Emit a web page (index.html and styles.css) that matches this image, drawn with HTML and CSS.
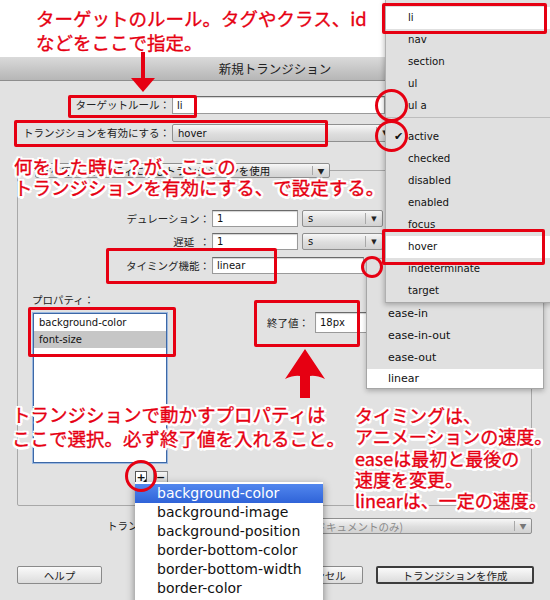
FILE: index.html
```html
<!DOCTYPE html>
<html lang="ja">
<head>
<meta charset="utf-8">
<title>新規トランジション</title>
<link rel="stylesheet" href="styles.css">
</head>
<body>
<div class="page">
  <header class="note note-top">ターゲットのルール。タグやクラス、id<br>などをここで指定。</header>

  <section class="dialog">
    <div class="titlebar">新規トランジション</div>
    <div class="dlg-body">
      <div class="row">
        <label class="lbl lbl-main">ターゲットルール：</label>
        <span class="input in-target">li</span>
      </div>
      <div class="row row-on">
        <label class="lbl lbl-main">トランジションを有効にする：</label>
        <span class="select sel-on"><span class="val">hover</span><span class="arr">▼</span></span>
      </div>

      <div class="group">
        <span class="select sel-legend"><span class="val">すべてのプロパティに同じトランジションを使用</span><span class="arr">▼</span></span>
        <div class="grow grow-first">
          <label class="lbl lbl-grp">デュレーション：</label>
          <span class="input in-num">1</span>
          <span class="select sel-unit"><span class="val">s</span><span class="arr">▼</span></span>
        </div>
        <div class="grow">
          <label class="lbl lbl-grp">遅延&ensp;：</label>
          <span class="input in-num">1</span>
          <span class="select sel-unit"><span class="val">s</span><span class="arr">▼</span></span>
        </div>
        <div class="grow grow-timing">
          <label class="lbl lbl-grp">タイミング機能：</label>
          <span class="input in-timing">linear</span>
        </div>
        <div class="props">
          <div class="props-left">
            <div class="lbl plabel">プロパティ：</div>
            <ul class="plist">
              <li>background-color</li>
              <li class="on">font-size</li>
            </ul>
            <div class="pm">
              <span class="sq sq-plus">+</span>
              <span class="sq sq-minus">−</span>
            </div>
          </div>
          <div class="endval">
            <label class="lbl">終了値：</label>
            <span class="input in-end">18px</span>
          </div>
        </div>
      </div>

      <div class="row row-where">
        <label class="lbl lbl-where">トランジションの作成場所：</label>
        <span class="select sel-where"><span class="val">(このドキュメントのみ)</span><span class="arr">▼</span></span>
      </div>

      <div class="buttons">
        <span class="btn btn-help">ヘルプ</span>
        <span class="btn btn-cancel">キャンセル</span>
        <span class="btn btn-ok">トランジションを作成</span>
      </div>
    </div>
  </section>

  <ul class="menu menu-timing">
    <li>cubic-bezier</li>
    <li>ease</li>
    <li>ease-in</li>
    <li>ease-in-out</li>
    <li>ease-out</li>
    <li class="hl last">linear</li>
  </ul>

  <ul class="menu menu-target">
    <li class="hl">li</li>
    <li>nav</li>
    <li>section</li>
    <li>ul</li>
    <li>ul a</li>
    <li class="sep"></li>
    <li><span class="check">✔</span>active</li>
    <li>checked</li>
    <li>disabled</li>
    <li>enabled</li>
    <li>focus</li>
    <li class="hl">hover</li>
    <li>indeterminate</li>
    <li>target</li>
  </ul>

  <ul class="pdrop">
    <li class="on">background-color</li>
    <li>background-image</li>
    <li>background-position</li>
    <li>border-bottom-color</li>
    <li>border-bottom-width</li>
    <li>border-color</li>
  </ul>

  <div class="rbox b-target"></div>
  <div class="rbox b-on"></div>
  <div class="rbox b-li"></div>
  <div class="rbox b-hover"></div>
  <div class="rbox b-timing"></div>
  <div class="rbox b-end"></div>
  <div class="rbox b-prop"></div>

  <div class="rcirc c-1"></div>
  <div class="rcirc c-2"></div>
  <div class="rcirc c-3"></div>
  <div class="rcirc c-4"></div>

  <svg class="arrow arrow-down" width="26" height="41" viewBox="0 0 26 41">
    <rect x="11" y="0" width="4" height="28" fill="#e60012"/>
    <polygon points="1,26 25,26 13,40" fill="#e60012"/>
  </svg>
  <svg class="arrow arrow-up" width="42" height="50" viewBox="0 0 42 50">
    <path d="M21 0 L41 30 Q32 26 26 27 L26 49 L16 49 L16 27 Q10 26 1 30 Z" fill="#e60012"/>
  </svg>

  <p class="note note-abs note-on">何をした時に？が、ここの<br>トランジションを有効にする、で設定する。</p>
  <p class="note note-abs note-prop">トランジションで動かすプロパティは<br>ここで選択。必ず終了値を入れること。</p>
  <p class="note note-abs note-timing">タイミングは、<br>アニメーションの速度。<br>easeは最初と最後の<br>速度を変更。<br>linearは、一定の速度。</p>
</div>
</body>
</html>
```

FILE: styles.css
```css
* { box-sizing: border-box; margin: 0; padding: 0; }
html, body { width: 550px; height: 600px; overflow: hidden; background: #fff; }
body { font-family: "Noto Sans CJK JP", sans-serif; color: #1e1e1e; }
ul { list-style: none; }

.page { position: relative; width: 550px; height: 600px; overflow: hidden; }

/* annotations */
.note {
  color: #e60012;
  font-family: "Noto Sans CJK JP", sans-serif;
  font-size: 18.5px;
  line-height: 23px;
  white-space: nowrap;
  -webkit-text-stroke: 0.35px #e60012;
}
.note-top { height: 57px; padding: 6px 0 0 36px; line-height: 24px; }
.note-abs {
  position: absolute;
  z-index: 20;
  text-shadow:
    -2px -2px 0 #fff, 2px -2px 0 #fff, -2px 2px 0 #fff, 2px 2px 0 #fff,
    0 -2.5px 0 #fff, 0 2.5px 0 #fff, -2.5px 0 0 #fff, 2.5px 0 0 #fff,
    -1px -2.5px 0 #fff, 1px 2.5px 0 #fff, -2.5px 1px 0 #fff, 2.5px -1px 0 #fff;
}
.note-on { left: 14px; top: 156px; line-height: 21px; }
.note-prop { left: 12px; top: 402px; line-height: 24px; }
.note-timing { left: 355px; top: 405px; line-height: 21.3px; font-size: 18px; }

/* dialog */
.dialog { height: 543px; background: #e2e2e2; }
.titlebar {
  height: 24px;
  border-bottom: 1px solid #8e8e8e;
  background: linear-gradient(#dadada, #b6b6b6);
  text-align: center;
  font-size: 12.5px;
  line-height: 23px;
  color: #222;
}
.dlg-body { padding-top: 15px; }

.row { display: flex; align-items: center; height: 18px; }
.row-on { margin-top: 10px; }

.lbl { font-size: 10.5px; line-height: 14px; white-space: nowrap; color: #222; }
.lbl-main { width: 170px; text-align: right; }
.lbl-grp { width: 192px; text-align: right; }

.input {
  display: flex;
  align-items: center;
  height: 18px;
  padding-left: 4px;
  background: #fff;
  border: 1px solid #9a9a9a;
  border-top-color: #6a6a6a;
  box-shadow: inset 0 1px 1px rgba(0, 0, 0, .18);
  font-family: "DejaVu Sans", sans-serif;
  font-size: 10px;
  color: #111;
}
.in-target { margin-left: 2px; width: 213px; }

.select {
  display: flex;
  align-items: center;
  height: 18px;
  background: linear-gradient(#f7f7f7, #dedede 55%, #d2d2d2);
  border: 1px solid #8f8f8f;
  border-radius: 2px;
  font-family: "DejaVu Sans", "Noto Sans CJK JP", sans-serif;
  font-size: 10px;
  color: #111;
}
.select .val { flex: 1; padding-left: 5px; white-space: nowrap; overflow: hidden; }
.select .arr {
  width: 17px;
  height: 70%;
  border-left: 1px solid #a8a8a8;
  display: flex;
  align-items: center;
  justify-content: center;
  font-size: 7px;
  color: #222;
}
.sel-on { margin-left: 2px; width: 222px; }

.group {
  margin: 28px 18px 0 17px;
  height: 336px;
  border: 1px solid #a8a8a8;
  border-radius: 2px;
}
.sel-legend {
  margin: -8px 0 0 17px;
  width: 295px;
  height: 15px;
  font-family: "Noto Sans CJK JP", sans-serif;
  font-size: 10.5px;
}

.grow { display: flex; align-items: center; height: 17px; margin-top: 6px; }
.grow-first { margin-top: 32px; }
.grow-timing { margin-top: 7px; }
.in-num { margin-left: 2px; width: 86px; height: 17px; }
.sel-unit { margin-left: 4px; width: 81px; height: 17px; }
.in-timing { margin-left: 2px; width: 152px; height: 17px; }

.props { display: flex; margin-top: 19px; }
.props-left { width: 150px; }
.plabel { margin-left: 14px; }
.plist {
  margin: 6px 0 0 15px;
  width: 134px;
  height: 150px;
  background: #fff;
  border: 1px solid #3d68a6;
  box-shadow: 0 0 0 1px #9bb8e0;
  font-family: "DejaVu Sans", sans-serif;
  font-size: 10px;
  color: #111;
}
.plist li { height: 17px; line-height: 17px; padding-left: 5px; }
.plist li.on { background: #c6c6c6; }

.pm { display: flex; gap: 6px; margin: 8px 0 0 117px; }
.sq {
  position: relative;
  display: flex;
  align-items: center;
  justify-content: center;
  width: 12px;
  height: 12px;
  border: 1px solid #555;
  background: #fff;
  font-family: "DejaVu Sans", sans-serif;
  font-weight: bold;
  font-size: 11px;
  line-height: 1;
  color: #111;
}
.sq-plus::after {
  content: "";
  position: absolute;
  right: 0;
  bottom: 0;
  border-left: 3px solid transparent;
  border-bottom: 3px solid #111;
}
.sq-minus { width: 15px; background: linear-gradient(#f5f5f5, #d5d5d5); border-color: #888; }

.endval { display: flex; align-items: center; height: 21px; margin: 19px 0 0 99px; }
.in-end { margin-left: 6px; width: 70px; height: 21px; }

.row-where { margin-top: 12px; height: 16px; }
.lbl-where { margin-left: 107px; width: 175px; }
.sel-where {
  margin-left: 3px;
  width: 247px;
  height: 16px;
  color: #8a8a8a;
  font-family: "Noto Sans CJK JP", sans-serif;
  font-size: 10.5px;
}
.sel-where .arr { color: #777; }

.buttons { display: flex; margin-top: 32px; }
.btn {
  display: flex;
  align-items: center;
  justify-content: center;
  height: 18px;
  font-size: 10.5px;
  color: #222;
  background: linear-gradient(#fafafa, #dcdcdc);
  border: 1px solid #8a8a8a;
  border-radius: 2px;
}
.btn-help { margin-left: 17px; width: 85px; }
.btn-cancel { margin-left: 174px; width: 87px; }
.btn-ok { margin-left: 13px; width: 158px; border: 2px solid #3c3c3c; }

/* popup menus */
.menu {
  position: absolute;
  background: #e0e0e0;
  font-family: "DejaVu Sans", sans-serif;
  color: #111;
}
.menu li { position: relative; height: 22px; line-height: 22px; padding-left: 22px; }
.menu li.hl { background: #fff; }
.menu li.sep { height: 9px; border-top: 1px solid #bdbdbd; }
.check { position: absolute; left: 8px; font-size: 11px; }

.menu-target {
  left: 385px;
  top: 0;
  width: 170px;
  padding-top: 7px;
  border-left: 1px solid #b0b0b0;
  border-bottom: 1px solid #a8a8a8;
  box-shadow: -1px 2px 5px rgba(0, 0, 0, .25);
  z-index: 6;
  font-size: 10.2px;
}
.menu-timing {
  left: 366px;
  top: 258px;
  width: 178px;
  border: 1px solid #a6a6a6;
  box-shadow: 0 2px 5px rgba(0, 0, 0, .25);
  z-index: 5;
  font-size: 11px;
}
.menu-timing li { padding-left: 21px; }
.menu-timing li.last { height: 19px; line-height: 19px; }

.pdrop {
  position: absolute;
  left: 135px;
  top: 482px;
  width: 188px;
  height: 130px;
  padding-top: 2px;
  background: #fff;
  box-shadow: 0 3px 8px rgba(0, 0, 0, .45);
  z-index: 8;
  font-family: "DejaVu Sans", sans-serif;
  font-size: 14px;
  color: #111;
}
.pdrop li { height: 19px; line-height: 19px; padding-left: 22px; }
.pdrop li.on { background: linear-gradient(#5287ee, #2f63d8); color: #fff; }

/* red marks */
.rbox { position: absolute; border: 3px solid #e60012; border-radius: 2px; z-index: 15; }
.b-target { left: 68px; top: 95px; width: 129px; height: 23px; }
.b-on { left: 14px; top: 120px; width: 314px; height: 27px; }
.b-li { left: 382px; top: 3px; width: 165px; height: 31px; }
.b-hover { left: 382px; top: 229px; width: 163px; height: 36px; }
.b-timing { left: 106px; top: 248px; width: 171px; height: 36px; }
.b-end { left: 254px; top: 300px; width: 106px; height: 47px; }
.b-prop { left: 28px; top: 307px; width: 148px; height: 50px; }

.rcirc { position: absolute; border: 3px solid #e60012; border-radius: 50%; z-index: 15; }
.c-1 { left: 375px; top: 89px; width: 33px; height: 33px; }
.c-2 { left: 375px; top: 120px; width: 33px; height: 32px; }
.c-3 { left: 361px; top: 256px; width: 22px; height: 22px; }
.c-4 { left: 125px; top: 460px; width: 32px; height: 32px; }

.arrow { position: absolute; z-index: 16; }
.arrow-down { left: 130px; top: 52px; }
.arrow-up { left: 284px; top: 349px; }
```
